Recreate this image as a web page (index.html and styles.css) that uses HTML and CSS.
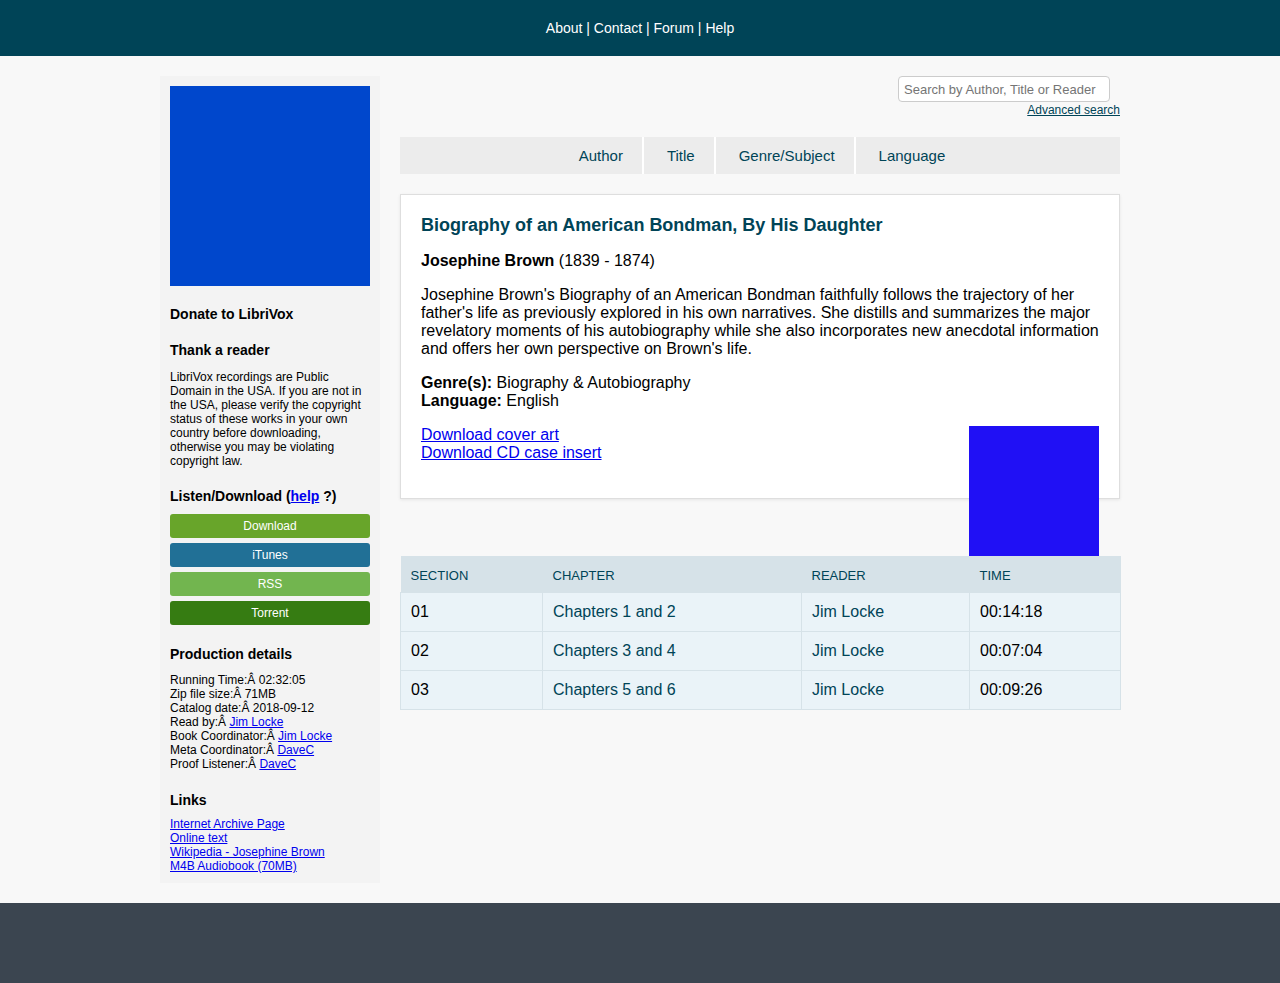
FILE: index.html
```html
<!DOCTYPE html>
<html lang="en">
<head>
<meta charset="utf-8">
<title>Biography of an American Bondman, By His Daughter - LibriVox</title>
<link rel="stylesheet" href="styles.css">
</head>
<body>
<header class="topbar">
  <nav class="toplinks"><a href="#">About</a> | <a href="#">Contact</a> | <a href="#">Forum</a> | <a href="#">Help</a></nav>
</header>

<div class="page">
  <aside class="sidebar">
    <div class="donate-img"></div>
    <h4 class="side-h first">Donate to LibriVox</h4>
    <h4 class="side-h">Thank a reader</h4>
    <p class="side-p">LibriVox recordings are Public Domain in the USA. If you are not in the USA, please verify the copyright status of these works in your own country before downloading, otherwise you may be violating copyright law.</p>
    <h4 class="side-h listen">Listen/Download (<a href="#" class="help">help</a> ?)</h4>
    <div class="buttons">
      <a href="#" class="btn btn-download">Download</a>
      <a href="#" class="btn btn-itunes">iTunes</a>
      <a href="#" class="btn btn-rss">RSS</a>
      <a href="#" class="btn btn-torrent">Torrent</a>
    </div>
    <h4 class="side-h prod">Production details</h4>
    <div class="side-p details">
      Running Time:Â 02:32:05<br>
      Zip file size:Â 71MB<br>
      Catalog date:Â 2018-09-12<br>
      Read by:Â <a href="#">Jim Locke</a><br>
      Book Coordinator:Â <a href="#">Jim Locke</a><br>
      Meta Coordinator:Â <a href="#">DaveC</a><br>
      Proof Listener:Â <a href="#">DaveC</a>
    </div>
    <h4 class="side-h links-h">Links</h4>
    <div class="side-p links">
      <a href="#">Internet Archive Page</a><br>
      <a href="#">Online text</a><br>
      <a href="#">Wikipedia - Josephine Brown</a><br>
      <a href="#">M4B Audiobook (70MB)</a>
    </div>
  </aside>

  <main class="main">
    <div class="search">
      <input class="search-input" type="text" placeholder="Search by Author, Title or Reader">
      <a href="#" class="adv">Advanced search</a>
    </div>

    <ul class="browse">
      <li><a href="#">Author</a></li>
      <li><a href="#">Title</a></li>
      <li><a href="#">Genre/Subject</a></li>
      <li><a href="#">Language</a></li>
    </ul>

    <div class="card">
      <h2 class="book-title">Biography of an American Bondman, By His Daughter</h2>
      <p class="p"><b>Josephine Brown</b> (1839 - 1874)</p>
      <p class="p">Josephine Brown's Biography of an American Bondman faithfully follows the trajectory of her father's life as previously explored in his own narratives. She distills and summarizes the major revelatory moments of his autobiography while she also incorporates new anecdotal information and offers her own perspective on Brown's life.</p>
      <p class="p"><b>Genre(s):</b> Biography &amp; Autobiography<br><b>Language:</b> English</p>
      <div class="cover"></div>
      <p class="p last"><a href="#">Download cover art</a><br><a href="#">Download CD case insert</a></p>
    </div>

    <table class="chapters">
      <thead>
        <tr><th class="c1">Section</th><th class="c2">Chapter</th><th class="c3">Reader</th><th class="c4">Time</th></tr>
      </thead>
      <tbody>
        <tr><td>01</td><td><a href="#">Chapters 1 and 2</a></td><td><a href="#">Jim Locke</a></td><td>00:14:18</td></tr>
        <tr><td>02</td><td><a href="#">Chapters 3 and 4</a></td><td><a href="#">Jim Locke</a></td><td>00:07:04</td></tr>
        <tr><td>03</td><td><a href="#">Chapters 5 and 6</a></td><td><a href="#">Jim Locke</a></td><td>00:09:26</td></tr>
      </tbody>
    </table>
  </main>
</div>

<footer class="footer"></footer>
</body>
</html>
```

FILE: styles.css
```css
* { box-sizing: border-box; }
html, body {
  margin: 0;
  padding: 0;
}
body {
  background: #f8f8f8;
  font-family: "Liberation Sans", Arial, sans-serif;
  color: #000;
}

.topbar {
  height: 56px;
  background: #004457;
  display: flex;
  align-items: center;
  justify-content: center;
  color: #fff;
  font-size: 14px;
}
.toplinks a { color: #fff; text-decoration: none; }

.page {
  width: 960px;
  margin: 20px auto 20px;
  display: flex;
  gap: 20px;
  align-items: flex-start;
}

/* Sidebar */
.sidebar {
  width: 220px;
  flex: none;
  background: #f3f3f3;
  padding: 10px 10px 10px;
}
.donate-img {
  width: 200px;
  height: 200px;
  background: #0047cc;
}
.side-h {
  margin: 20px 0 0;
  font-size: 14px;
  line-height: 16px;
  font-weight: bold;
}
.side-h.first { margin-top: 20px; }
.side-h.listen { margin-top: 20px; }
.side-h.prod { margin-top: 21px; }
.side-h.links-h { margin-top: 21px; }
.side-p {
  margin: 12px 0 0;
  font-size: 12px;
  line-height: 14px;
}
.details { margin-top: 11px; }
.links { margin-top: 9px; }
.sidebar a { color: #0000ee; }
.help { font-weight: bold; }

.buttons {
  margin-top: 10px;
  display: flex;
  flex-direction: column;
  gap: 5px;
}
.btn {
  display: block;
  height: 24px;
  line-height: 24px;
  border-radius: 3px;
  text-align: center;
  color: #fff !important;
  text-decoration: none;
  font-size: 12px;
}
.btn-download { background: #68a52a; }
.btn-itunes { background: #217096; }
.btn-rss { background: #72b54f; }
.btn-torrent { background: #367c12; }

/* Main */
.main {
  width: 720px;
  flex: none;
}
.search {
  display: flex;
  flex-direction: column;
  align-items: flex-end;
}
.search-input {
  width: 212px;
  height: 26px;
  margin-right: 10px;
  border: 1px solid #cccccc;
  border-radius: 4px;
  background: #fff;
  padding: 0 5px;
  font-family: "Liberation Sans", Arial, sans-serif;
  font-size: 13px;
  color: #333;
}
.search-input::placeholder { color: #757575; }
.adv {
  margin-top: 1px;
  font-size: 12px;
  line-height: 14px;
  color: #004457;
}

.browse {
  list-style: none;
  margin: 20px 0 0;
  padding: 0;
  height: 37px;
  background: #ececec;
  display: flex;
  justify-content: center;
}
.browse li + li { border-left: 2px solid #fff; }
.browse a {
  display: block;
  height: 37px;
  line-height: 37px;
  padding: 0 19px 0 23px;
  font-size: 15px;
  color: #004457;
  text-decoration: none;
}

.card {
  margin-top: 20px;
  background: #fff;
  border: 1px solid #dedede;
  box-shadow: 0 1px 3px rgba(0,0,0,0.08);
  padding: 19px 20px 20px;
}
.book-title {
  margin: 0 0 16px;
  font-size: 18px;
  line-height: 22px;
  color: #004457;
}
.p {
  margin: 0 0 16px;
  font-size: 16px;
  line-height: 18px;
}
.p a { color: #0000ee; }
.cover {
  float: right;
  width: 130px;
  height: 130px;
  background: #2010f5;
}

.chapters {
  clear: both;
  width: 720px;
  margin-top: 20px;
  border-collapse: collapse;
  table-layout: fixed;
}
.chapters th {
  background: #d6e2e8;
  height: 36px;
  text-align: left;
  font-weight: normal;
  text-transform: uppercase;
  font-size: 13px;
  color: #004457;
  padding: 3px 10px 0;
}
.c1 { width: 142px; }
.c2 { width: 259px; }
.c3 { width: 168px; }
.c4 { width: 151px; }
.chapters td {
  background: #eaf3f8;
  border: 1px solid #d6e2e8;
  height: 39px;
  padding: 0 10px;
  font-size: 16px;
  color: #000;
}
.chapters td a {
  color: #004457;
  text-decoration: none;
}

.footer {
  height: 80px;
  background: #3b4550;
}
```
